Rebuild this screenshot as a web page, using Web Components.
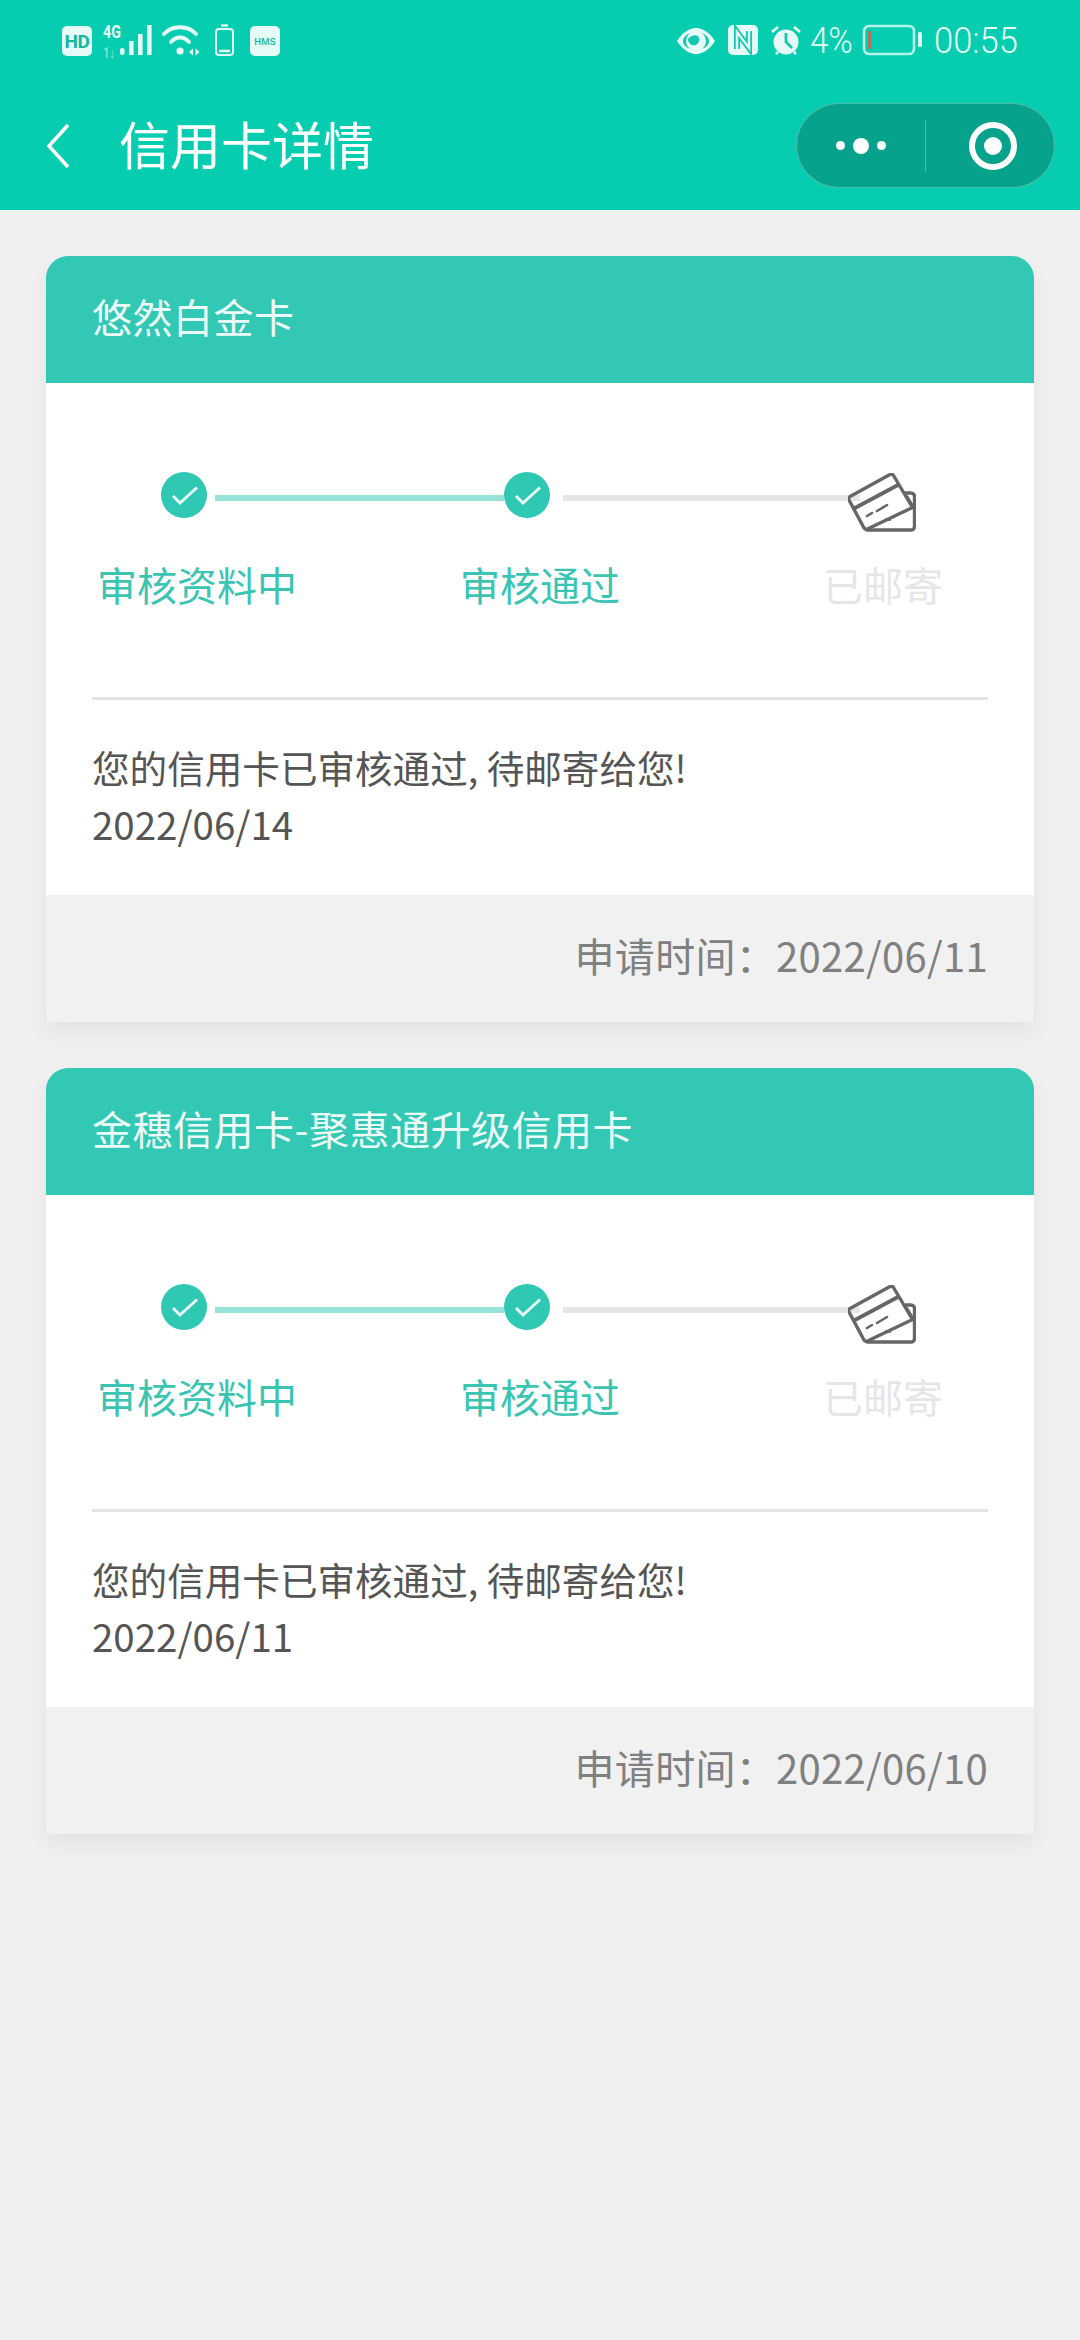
<!DOCTYPE html>
<html lang="zh-CN"><head><meta charset="utf-8">
<style>
html,body{margin:0;padding:0;background:#f0f0f0}
body{width:1080px;height:2340px;overflow:hidden;font-family:"Noto Sans CJK SC","Noto Sans",sans-serif}
</style></head>
<body>
<app-page>
  <app-header slot="header" title-text="信用卡详情"></app-header>
  <credit-card-item name="悠然白金卡" date="2022/06/14" applied="2022/06/11"></credit-card-item>
  <credit-card-item name="金穗信用卡-聚惠通升级信用卡" date="2022/06/11" applied="2022/06/10"></credit-card-item>
</app-page>
<script>
function el(name,html){customElements.define(name,class extends HTMLElement{
  connectedCallback(){ if(this.shadowRoot)return; const r=this.attachShadow({mode:'open'}); r.innerHTML=typeof html==='function'?html(this):html; }
});}
el('app-page',`<style>:host{display:block;width:1080px}
main{display:flex;flex-direction:column;gap:46px;padding:46px}</style>
<slot name="header"></slot><main><slot></slot></main>`);

el('status-bar',`<style>
:host{display:flex;justify-content:space-between;height:80px;color:#e6fbf7;font-family:Roboto,sans-serif}
.l,.r{display:flex;align-items:flex-start}
.l{padding:24px 0 0 62px}.r{padding:24px 63px 0 0}
svg{display:block;flex:none}
.box{width:30px;height:30px;border-radius:5px;background:#e6fbf7;color:#12b79f;display:flex;align-items:center;justify-content:center;font-weight:700;flex:none;margin-top:2px}
.hd{font-size:19px;letter-spacing:-.5px}.hms{font-size:9.500px;letter-spacing:.3px;font-weight:500}
.net{width:17px;margin-left:11px;font-size:19px;font-weight:700;line-height:16px;display:flex;flex-direction:column;transform:scaleX(.75);transform-origin:left top;white-space:nowrap}
.net i{font-style:normal;opacity:.5;font-size:15px;margin-top:5px}
.num{display:inline-block;font-size:36px;font-weight:300;line-height:36px;transform:scaleX(.92);transform-origin:left top;white-space:nowrap;margin-top:-1px}
.pct{width:46px;margin-left:8px}
.time{width:83px;margin-left:12px;transform:scaleX(.96)}
</style>
<div class="l">
 <div class="box hd">HD</div>
 <div class="net">4G<i>1↓</i></div>
 <svg width="34" height="32" viewBox="0 0 34 32" fill="#e6fbf7"><rect x="0" y="24" width="4.500" height="7" rx="2"/><rect x="9" y="17" width="4.600" height="14"/><rect x="18" y="10" width="4.600" height="21"/><rect x="27" y="1" width="4.600" height="30"/></svg>
 <svg width="40" height="32" viewBox="0 0 40 32" style="margin-left:8px" fill="none" stroke="#e6fbf7" stroke-width="3.800" stroke-linecap="round"><path d="M2 10C10 1 26 1 34 10"/><path d="M9 18C14 12 22 12 27 18"/><circle cx="18" cy="27" r="3.600" fill="#e6fbf7" stroke="none"/><path d="M27 28l4-3.500v7zM37.500 28l-4-3.500v7z" fill="#e6fbf7" stroke="none"/></svg>
 <svg width="22" height="34" viewBox="0 0 22 34" style="margin-left:12px" fill="none" stroke="#e6fbf7" stroke-width="2"><rect x="2" y="5" width="17" height="26" rx="3"/><path d="M7 1.500h7" stroke-width="2.400"/><path d="M5 27h11" stroke-width="2.500"/></svg>
 <div class="box hms" style="margin-left:14px">HMS</div>
</div>
<div class="r">
 <svg width="40" height="28" viewBox="0 0 40 28" style="margin-top:3px"><path d="M1 14C8 3 16 1 20 1s12 2 19 13c-7 11-15 13-19 13S8 25 1 14Z" fill="#e6fbf7"/><ellipse cx="20" cy="14" rx="13" ry="9" fill="#12c9ac"/><circle cx="20" cy="14" r="10" fill="#e6fbf7"/><path d="M12 12a6 6 0 0 0 8 6 6 6 0 0 0 2-9 8 8 0 0 0-10 3Z" fill="#12c9ac"/></svg>
 <svg width="30" height="30" viewBox="0 0 30 30" style="margin:1px 0 0 12px"><rect width="30" height="30" rx="5" fill="#e6fbf7"/><path d="M9 24V7l12 16V6" fill="none" stroke="#12c9ac" stroke-width="6"/><path d="M9 24V7l12 16V6" fill="none" stroke="#e6fbf7" stroke-width="2.400"/></svg>
 <svg width="32" height="32" viewBox="0 0 32 32" style="margin:1px 0 0 12px"><circle cx="16" cy="17" r="12.500" fill="#e6fbf7"/><path d="M16 8v9l6 6" fill="none" stroke="#12c9ac" stroke-width="2.800"/><path d="M2 7l6-5M30 7l-6-5M6 29l2-2M26 29l-2-2" stroke="#e6fbf7" stroke-width="2.600" fill="none"/></svg>
 <span class="num pct">4%</span>
 <svg width="60" height="32" viewBox="0 0 60 32" style="margin-left:6px"><rect x="2" y="2" width="50" height="28" rx="5" fill="none" stroke="#b3f4e9" stroke-width="2.600"/><rect x="6" y="7" width="3" height="18" fill="#a9775c"/><rect x="56" y="8" width="4" height="15" rx="1.500" fill="#d8faf3"/></svg>
 <span class="num time">00:55</span>
</div>`);

el('app-header',h=>`<style>
:host{display:block;background:#06cdb0;height:210px;box-sizing:border-box}
nav{display:flex;align-items:center;height:85px;margin-top:23px;padding:0 25px 0 46px}
.back{flex:none;display:block}
h1{margin:0 0 5px 49px;font-size:51px;line-height:60px;font-weight:400;color:#fff;flex:1;white-space:nowrap}
.cap{width:259px;height:85px;box-sizing:border-box;border:1.500px solid rgba(255,255,255,.28);border-radius:43px;background:#07a28b;display:flex;align-items:center;flex:none}
.more{width:128px;display:flex;align-items:center;justify-content:center;gap:8px}
.more i{display:block;width:9px;height:9px;background:#fff;border-radius:50%}
.more i.m{width:16px;height:16px}
.sep{width:1px;height:52px;background:rgba(255,255,255,.28)}
.tgt{flex:1;display:flex;justify-content:center;padding-left:6px}
.tgt svg{display:block}
</style>
<status-bar></status-bar>
<nav>
 <svg class="back" width="24" height="46" viewBox="0 0 24 46"><path d="M22 2 3 23l19 21" fill="none" stroke="#fff" stroke-width="3.600"/></svg>
 <h1>${h.getAttribute('title-text')}</h1>
 <div class="cap"><div class="more"><i></i><i class="m"></i><i></i></div><div class="sep"></div>
 <div class="tgt"><svg width="48" height="48" viewBox="0 0 48 48"><circle cx="24" cy="24" r="21" fill="none" stroke="#fff" stroke-width="6"/><circle cx="24" cy="24" r="9" fill="#fff"/></svg></div></div>
</nav>`);

el('step-dot',`<style>:host{display:block;width:46px;height:46px;flex:none}svg{display:block}</style>
<svg width="46" height="46" viewBox="0 0 46 46"><circle cx="23" cy="23" r="23" fill="#2fc8b3"/><path d="M12 24l7 7L36 15.500" fill="none" stroke="#e8faf7" stroke-width="3"/></svg>`);

el('progress-track',`<style>
:host{display:block;padding-top:89px}
.track{display:flex;align-items:flex-start;height:60px;padding-left:115px}
.ln{height:6px;margin-top:23px;flex:none}
.a{width:289px;margin-left:8px;background:#98e3d9}
.b{width:297px;margin-left:13px;background:#e6e6e6}
.ic{display:block;flex:none;margin:1px 0 0 -12px}
.labels{display:grid;grid-template-columns:302px 1fr 302px;margin-top:24px;font-size:40px;line-height:56px;text-align:center;color:#39c5b1}
.off{color:#e6e6e6}
</style>
<div class="track"><step-dot></step-dot><div class="ln a"></div><step-dot></step-dot><div class="ln b"></div>
<svg class="ic" width="68" height="59" viewBox="848 473 68 59" fill="none" stroke="#666" stroke-width="3.400" stroke-linejoin="round" stroke-linecap="round">
<path d="M906 493h5a3.500 3.500 0 0 1 3.500 3.500v30a3.500 3.500 0 0 1-3.500 3.500h-44"/>
<path d="M907 497l6 10"/>
<path d="M850 496.500l40-22a3 3 0 0 1 3.500 1l19 32-45 21.500a3 3 0 0 1-3.500-1l-15-28a2.500 2.500 0 0 1 1-3.500Z"/>
<path d="M855 508l43-23" stroke-width="3.800"/>
<path d="M867 516l5-3M877 511l10-6" stroke-width="2.600"/>
<path d="M886 519l4 1" stroke-width="2"/>
</svg></div>
<div class="labels"><span>审核资料中</span><span>审核通过</span><span class="off">已邮寄</span></div>`);

el('credit-card-item',h=>`<style>
:host{display:block;width:988px;border-radius:22px 22px 0 0;box-shadow:0 10px 22px rgba(0,0,0,.06);background:#fff}
header{height:127px;box-sizing:border-box;padding:0 46px 7px;display:flex;align-items:center;background:#32c8b3;color:#eafbf8;font-size:40px;letter-spacing:.5px;border-radius:22px 22px 0 0}
.hr{height:2.500px;background:#e4e4e4;margin:85px 46px 0}
.msg{margin:0;box-sizing:border-box;height:195.500px;padding:39px 46px 0;font-size:37.600px;line-height:56px;color:#555}
.msg span{font-size:38.500px}
footer{height:127px;box-sizing:border-box;padding:0 46px 7px;background:#f1f1f1;display:flex;align-items:center;justify-content:flex-end;color:#808080;font-size:40px;letter-spacing:.3px}
</style>
<header>${h.getAttribute('name')}</header>
<progress-track></progress-track>
<div class="hr"></div>
<p class="msg">您的信用卡已审核通过, 待邮寄给您!<br><span>${h.getAttribute('date')}</span></p>
<footer>申请时间：${h.getAttribute('applied')}</footer>`);
</script>
</body></html>
